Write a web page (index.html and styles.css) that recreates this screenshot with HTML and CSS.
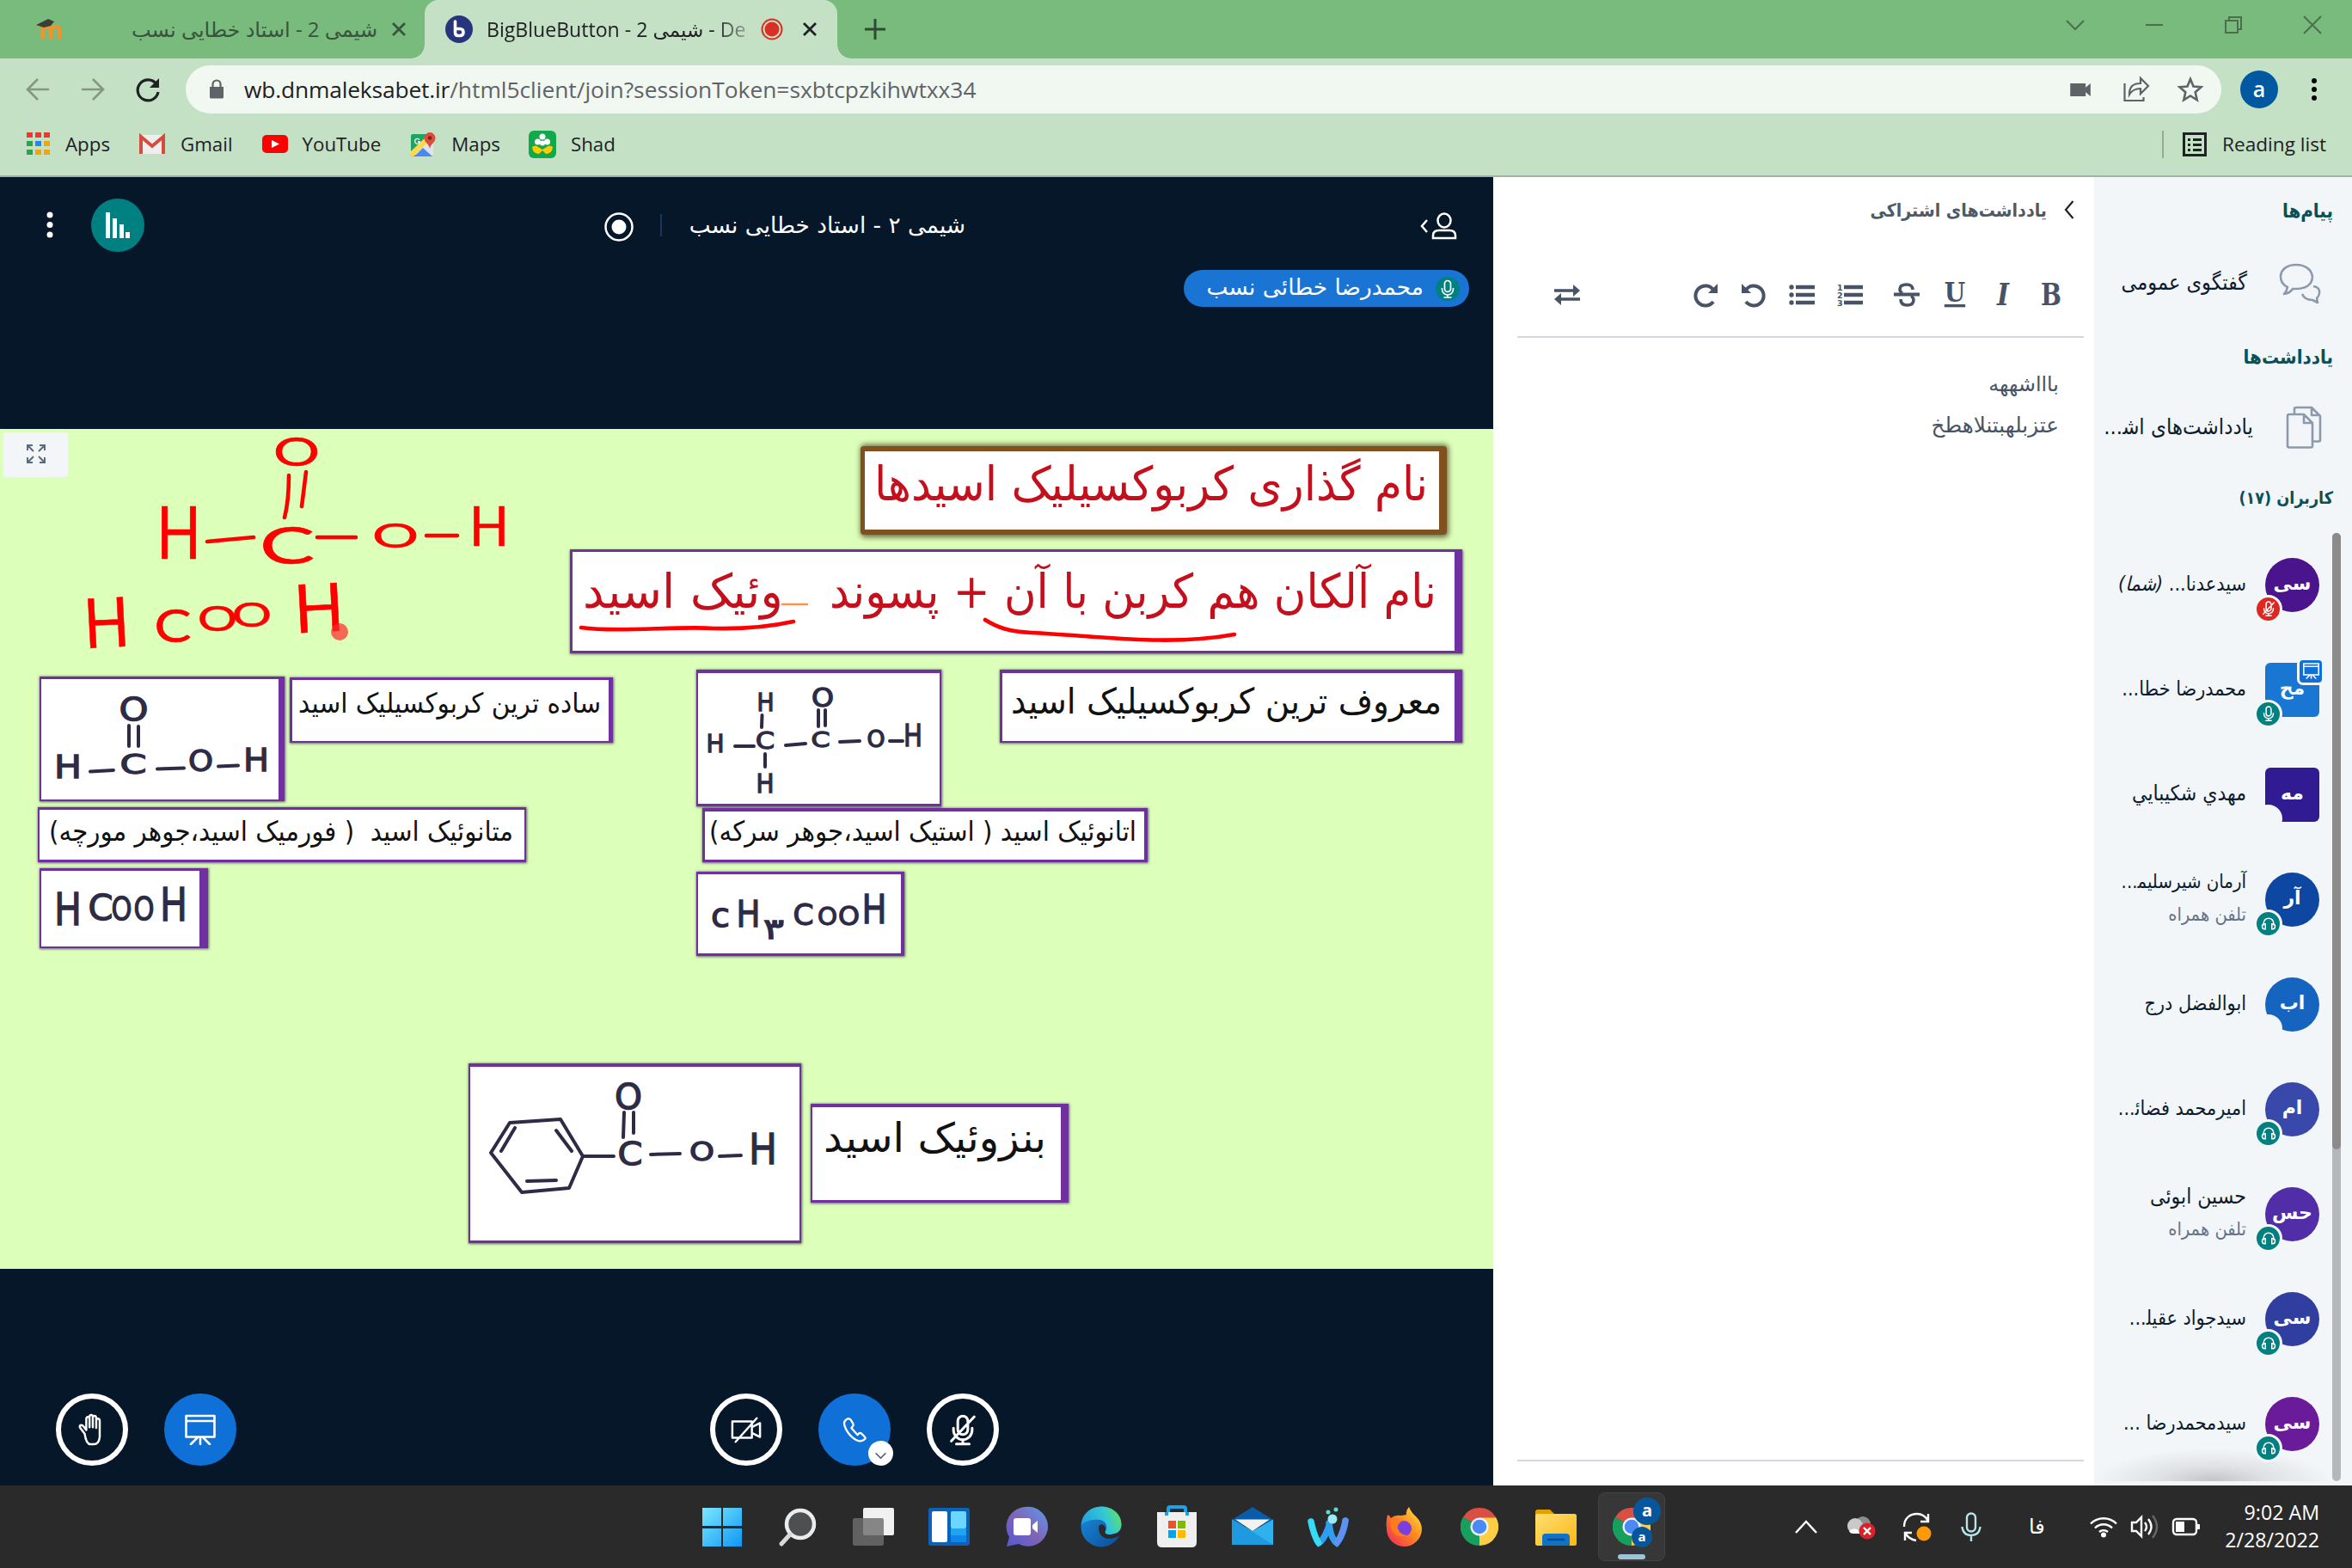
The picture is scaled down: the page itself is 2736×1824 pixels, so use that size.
FILE: index.html
```html
<!DOCTYPE html>
<html lang="fa">
<head>
<meta charset="utf-8">
<title>BigBlueButton - شیمی 2</title>
<link rel="stylesheet" href="styles.css">
</head>
<body>
<svg class="defs" width="0" height="0" aria-hidden="true">
  <defs>
    <symbol id="mic" viewBox="0 0 24 24"><path d="M12 2.5a3.5 3.5 0 0 0-3.5 3.5v6a3.5 3.5 0 0 0 7 0V6A3.5 3.5 0 0 0 12 2.5zM5.5 11v1.5a6.5 6.5 0 0 0 13 0V11M12 19v3M7.500 22h9"/></symbol>
    <symbol id="mic-off" viewBox="0 0 24 24"><path d="M12 2.500a3.500 3.500 0 0 0-3.500 3.500v6a3.500 3.500 0 0 0 7 0V6A3.500 3.500 0 0 0 12 2.500zM5.500 11v1.500a6.500 6.500 0 0 0 13 0V11M12 19v3M7.500 22h9M20 3 4 20"/></symbol>
    <symbol id="headset" viewBox="0 0 24 24"><path d="M5 15v-3a7 7 0 0 1 14 0v3M6 13c-2 0-3 1.500-3 3.500S4 20 6 20h1.500v-7zM18 13c2 0 3 1.500 3 3.500S20 20 18 20h-1.500v-7z"/></symbol>
    <symbol id="board" viewBox="0 0 36 36"><path d="M1.500 2h33v24.500h-33zM1.500 8h33M18 27v8M15 27 7 35M21 27l8 8"/></symbol>
    <symbol id="chrome" viewBox="0 0 48 48">
      <path d="M24 24 3.200 12A24 24 0 0 1 44.800 12z" fill="#d94f44"/>
      <path d="M24 24 44.800 12A24 24 0 0 1 24 48z" fill="#ffce44"/>
      <path d="M24 24 24 48A24 24 0 0 1 3.200 12z" fill="#17a05d"/>
      <path d="M24 12.500h21L34 30 24 48z" fill="#ffce44"/>
      <path d="M3.200 12 14 30l10 5-3 12.800A24 24 0 0 1 3.200 12z" fill="#17a05d"/>
      <circle cx="24" cy="24" r="11.500" fill="#f4f4f4"/><circle cx="24" cy="24" r="9" fill="#4a8af4"/>
    </symbol>
    <linearGradient id="win" x1="0" y1="0" x2="1" y2="1"><stop offset="0" stop-color="#7be8ff"/><stop offset="1" stop-color="#1097f3"/></linearGradient>
    <linearGradient id="team" x1="1" y1="0" x2="0" y2="1"><stop offset="0" stop-color="#5d9bf0"/><stop offset=".5" stop-color="#8065b5"/><stop offset="1" stop-color="#5558d6"/></linearGradient>
    <linearGradient id="edge1" x1="0" y1=".5" x2="1" y2=".2"><stop offset="0" stop-color="#1f9fe0"/><stop offset=".6" stop-color="#35c8d5"/><stop offset="1" stop-color="#63e558"/></linearGradient>
    <linearGradient id="edge2" x1="0" y1="0" x2="1" y2="1"><stop offset="0" stop-color="#1a8fe0"/><stop offset="1" stop-color="#0c4a94"/></linearGradient>
    <linearGradient id="fox" x1="1" y1="0" x2="0" y2="1"><stop offset="0" stop-color="#fff04d"/><stop offset=".45" stop-color="#ff8a1e"/><stop offset="1" stop-color="#f0215e"/></linearGradient>
    <linearGradient id="fold" x1="0" y1="0" x2="1" y2="1"><stop offset="0" stop-color="#ffdf73"/><stop offset="1" stop-color="#fbb813"/></linearGradient>
  </defs>
</svg>

<header class="tabstrip">
  <div class="tab">
    <svg class="moodle" viewBox="0 0 34 26"><path d="M10 25V14q0-4 4-4t5 4v11M19 25V14q0-4 5-4t5 4v11" fill="none" stroke="#f0932b" stroke-width="4.500"/><path d="M2 8 16 1l7 3-4 5-8 2z" fill="#3c3f38"/><path d="M3 9v8" stroke="#b9a04a"/></svg>
    <span class="tab-title fa" dir="rtl">شیمی 2 - استاد خطایی نسب</span>
    <svg class="x" viewBox="0 0 18 18"><path d="m2 2 14 14M16 2 2 16"/></svg>
  </div>
  <div class="tab active">
    <svg class="bbb" viewBox="0 0 32 32"><circle cx="16" cy="16" r="16" fill="#27357c"/><path d="M11.500 7v13q0 3.500 3.500 3.500h2q4 0 4-4t-4-4h-5" fill="none" stroke="#fff" stroke-width="3.600" stroke-linecap="round"/></svg>
    <span class="tab-title clip">BigBlueButton - شیمی 2 - De</span>
    <svg class="rec" viewBox="0 0 26 26"><circle cx="13" cy="13" r="11.500" fill="none" stroke="#d93025" stroke-width="2"/><circle cx="13" cy="13" r="8.500" fill="#d93025"/></svg>
    <svg class="x" viewBox="0 0 18 18"><path d="m2 2 14 14M16 2 2 16"/></svg>
  </div>
  <svg class="plus" viewBox="0 0 26 26"><path d="M13 1v24M1 13h24"/></svg>
  <div class="winctl">
    <svg viewBox="0 0 22 22"><path d="m1 6 10 10L21 6"/></svg>
    <svg viewBox="0 0 22 22"><path d="M1 11h20"/></svg>
    <svg viewBox="0 0 22 22"><path d="M2 6h14v14H2zM6 6V2h14v14h-4"/></svg>
    <svg viewBox="0 0 22 22"><path d="m1 1 20 20M21 1 1 21"/></svg>
  </div>
</header>

<div class="toolbar">
  <svg class="nav dim" viewBox="0 0 28 28"><path d="M27 14H2M14 2 2 14l12 12"/></svg>
  <svg class="nav dim" viewBox="0 0 28 28"><path d="M1 14h25M14 2l12 12-12 12"/></svg>
  <svg class="nav" viewBox="0 0 28 28"><path d="M24 8A12 12 0 1 0 26 17" stroke-width="3.200"/><path d="M27 1v11H16z" fill="#202124" stroke="none"/></svg>
  <div class="omnibox">
    <svg class="lock" viewBox="0 0 18 24"><path d="M1 9h16v12q0 1.500-1.500 1.500h-13Q1 22.500 1 21z" fill="#5f6368"/><path d="M4.500 9V6a4.500 4.500 0 0 1 9 0v3" fill="none" stroke="#5f6368" stroke-width="2.200"/></svg>
    <span class="url"><b>wb.dnmaleksabet.ir</b>/html5client/join?sessionToken=sxbtcpzkihwtxx34</span>
    <svg class="ob cam" viewBox="0 0 26 18"><path d="M0 1h19v5l6-5v16l-6-5v5H0z" fill="#5f6368"/></svg>
    <svg class="ob share" viewBox="0 0 30 30"><path d="M1.500 8v20h22v-4M7 21c0-9 4-13 13-13V2l9 9-9 9v-6c-6 0-10 2-13 7z" fill="none" stroke="#5f6368" stroke-width="2.200"/></svg>
    <svg class="ob star" viewBox="0 0 30 30"><path d="m15 3 3.500 8.500 9 .8-6.800 6 2 9L15 22.500l-7.700 4.800 2-9-6.800-6 9-.8z" fill="none" stroke="#5f6368" stroke-width="2.600"/></svg>
  </div>
  <span class="me">a</span>
  <svg class="kebab" viewBox="0 0 6 28"><circle cx="3" cy="4" r="3"/><circle cx="3" cy="14" r="3"/><circle cx="3" cy="24" r="3"/></svg>
</div>

<nav class="bookmarks">
  <svg class="ico" viewBox="0 0 27 27"><g fill="#f5342c"><path d="M0 0h7v6H0zM10 0h7v6h-7zM20 0h7v6h-7z"/></g><path d="M0 10h7v6H0zM0 20h7v6H0z" fill="#2ea24f"/><path d="M10 10h7v6h-7z" fill="#1e88f5"/><path d="M20 10h7v6h-7zM10 20h7v6h-7zM20 20h7v6h-7z" fill="#f3a500"/></svg>
  <span>Apps</span>
  <svg class="ico g" viewBox="0 0 30 22"><rect width="30" height="22" rx="1.500" fill="#eee"/><path d="M2 22V2l13 11L28 2v20" fill="none" stroke="#d54b3d" stroke-width="4"/></svg>
  <span>Gmail</span>
  <svg class="ico y" viewBox="0 0 30 21"><rect width="30" height="21" rx="5" fill="#f00"/><path d="m11 6 9 4.500-9 4.500z" fill="#fff"/></svg>
  <span>YouTube</span>
  <svg class="ico m" viewBox="0 0 30 30"><rect y="3" width="26" height="26" rx="2" fill="#1fa363"/><path d="M0 27 24 4l2 4v19q0 2-2 2z" fill="#dfe3ea"/><path d="M0 23 20 4l4 4L3 29H2q-2 0-2-2z" fill="#ffd84d"/><path d="m4 29 10-10 11 10z" fill="#4a89f3"/><path d="M22 1a6.500 6.500 0 0 1 6.500 6.500C28.500 13 23 14 22 20c-1-6-6.500-7-6.500-12.500A6.500 6.500 0 0 1 22 1z" fill="#dc4b3e"/><circle cx="22" cy="7.500" r="2.300" fill="#7d2419"/><path d="M10 9.500A3 3 0 1 0 10.500 12H8" fill="none" stroke="#fff" stroke-width="1.300"/></svg>
  <span>Maps</span>
  <svg class="ico s" viewBox="0 0 32 32"><rect width="32" height="32" rx="6" fill="#12a84b"/><g fill="#fff"><circle cx="16" cy="7" r="3.500"/><circle cx="10.500" cy="13" r="3.500"/><circle cx="21.500" cy="13" r="3.500"/><circle cx="16" cy="14.500" r="3"/></g><path d="M4 19q4-3 7 0l5 3 5-3q3-3 7 0-1 8-8 8l-4-4-4 4q-7 0-8-8z" fill="#fc0"/></svg>
  <span>Shad</span>
  <div class="reading">
    <svg viewBox="0 0 28 28"><path d="M1.500 1.500h25v25h-25z" fill="none" stroke="#202124" stroke-width="3"/><path d="M6 8.500h3M6 14.500h3M6 20.500h3M12 8.500h10M12 14.500h10M12 20.500h10" stroke="#202124" stroke-width="3"/></svg>
    <span>Reading list</span>
  </div>
</nav>

<main class="app">
  <section class="stage">
    <div class="stage-head">
      <svg class="dots" viewBox="0 0 8 32"><circle cx="4" cy="4" r="3.500"/><circle cx="4" cy="15.500" r="3.500"/><circle cx="4" cy="27" r="3.500"/></svg>
      <span class="stats"><svg viewBox="0 0 30 30"><path d="M1 0h5v30H1zM9 7h5v23H9zM17 14h5v16h-5zM24 23h5v7h-5z" fill="#fff"/></svg></span>
      <svg class="record" viewBox="0 0 34 34"><circle cx="17" cy="17" r="15.500" fill="none" stroke="#fff" stroke-width="2.500"/><circle cx="17" cy="17" r="8.500" fill="#fff"/></svg>
      <i class="bar"></i>
      <h1 dir="rtl">شیمی ۲ - استاد خطایی نسب</h1>
      <svg class="users" viewBox="0 0 44 32"><path d="m8 9-6 7 6 7" /><ellipse cx="28" cy="9.500" rx="7.500" ry="8"/><path d="M15 30v-3q0-6 7-6h12q7 0 7 6v3z"/></svg>
    </div>
    <div class="talking" dir="rtl"><span class="mic-dot"><svg><use href="#mic"/></svg></span><span>محمدرضا خطائی نسب</span></div>

    <div class="slide">
      <svg class="canvas" viewBox="0 499 1737 977">
        <defs><filter id="soft" x="-5%" y="-20%" width="110%" height="140%"><feGaussianBlur stdDeviation="3"/></filter>
        <filter id="soft2" x="-5%" y="-20%" width="110%" height="140%"><feGaussianBlur stdDeviation="1.500"/></filter></defs>
        <rect x="1001" y="517" width="684" height="108" rx="5" fill="#4d4226" opacity=".8" filter="url(#soft)"/>
        <rect x="1001" y="519" width="682" height="103" rx="4" fill="#80501f"/><rect x="1006" y="525" width="668" height="91" fill="#fff"/>
        <g fill="#3a3050" opacity=".75" filter="url(#soft2)">
          <rect x="663" y="640" width="1039" height="121"/><rect x="1163" y="779" width="539" height="86"/><rect x="810" y="779" width="286" height="160"/><rect x="817" y="940" width="519" height="64"/><rect x="810" y="1014" width="243" height="99"/><rect x="337" y="788" width="377" height="77"/><rect x="46" y="787" width="286" height="146"/><rect x="44" y="939" width="569" height="65"/><rect x="46" y="1010" width="197" height="94"/><rect x="545" y="1237" width="388" height="210"/><rect x="943" y="1284" width="301" height="116"/>
        </g>
        <g fill="#7030a0">
          <rect x="663" y="639" width="1038" height="121"/><rect x="1163" y="779" width="538" height="85"/><rect x="810" y="779" width="285" height="159"/><rect x="817" y="940" width="518" height="63"/><rect x="810" y="1014" width="242" height="98"/><rect x="337" y="788" width="376" height="76"/><rect x="46" y="787" width="285" height="145"/><rect x="44" y="939" width="568" height="64"/><rect x="46" y="1010" width="196" height="93"/><rect x="545" y="1237" width="387" height="209"/><rect x="943" y="1284" width="300" height="115"/>
        </g>
        <g fill="#fff">
          <rect x="666" y="642" width="1026" height="115"/><rect x="1166" y="783" width="526" height="79"/><rect x="812" y="783" width="281" height="152"/><rect x="820" y="944" width="511" height="56"/><rect x="812" y="1017" width="236" height="92"/><rect x="340" y="791" width="368" height="71"/><rect x="48" y="790" width="276" height="140"/><rect x="46" y="942" width="564" height="58"/><rect x="48" y="1013" width="184" height="88"/><rect x="547" y="1241" width="383" height="202"/><rect x="945" y="1288" width="289" height="108"/>
        </g>
        <g class="caption red" font-size="55">
          <text x="1661" y="582" textLength="644" lengthAdjust="spacingAndGlyphs">نام گذاری کربوکسیلیک اسیدها</text>
          <text x="1671" y="707" textLength="706" lengthAdjust="spacingAndGlyphs">نام آلکان هم کربن با آن + پسوند</text>
          <text x="911" y="707" textLength="233" lengthAdjust="spacingAndGlyphs">وئیک اسید</text>
        </g>
        <path d="M909 703h31" stroke="#f79646" stroke-width="2.500"/>
        <g class="caption" font-size="41">
          <text x="1677" y="830" textLength="501" lengthAdjust="spacingAndGlyphs">معروف ترین کربوکسیلیک اسید</text>
          <text x="1217" y="1340" font-size="47" textLength="259" lengthAdjust="spacingAndGlyphs">بنزوئیک اسید</text>
        </g>
        <g class="caption" font-size="32">
          <text x="699" y="829" textLength="352" lengthAdjust="spacingAndGlyphs">ساده ترین کربوکسیلیک اسید</text>
          <text x="1322" y="978" textLength="497" lengthAdjust="spacingAndGlyphs">اتانوئیک اسید ( استیک اسید،جوهر سرکه)</text>
          <text x="597" y="978" textLength="540" lengthAdjust="spacingAndGlyphs">متانوئیک اسید&#160; ( فورمیک اسید،جوهر مورچه)</text>
        </g>
        <g class="formula">
          <text x="155.500" y="838" font-size="37" textLength="34" lengthAdjust="spacingAndGlyphs">O</text>
          <text x="79" y="905" font-size="37" textLength="32" lengthAdjust="spacingAndGlyphs">H</text>
          <text x="155" y="900" font-size="32" textLength="31" lengthAdjust="spacingAndGlyphs">C</text>
          <text x="233.500" y="897" font-size="33" textLength="29" lengthAdjust="spacingAndGlyphs">O</text>
          <text x="298" y="897" font-size="38" textLength="30" lengthAdjust="spacingAndGlyphs">H</text>
          <text x="79" y="1076" font-size="52" textLength="32" lengthAdjust="spacingAndGlyphs">H</text>
          <text x="117" y="1070" font-size="41" textLength="29" lengthAdjust="spacingAndGlyphs">C</text>
          <text x="141.500" y="1070" font-size="37" textLength="24" lengthAdjust="spacingAndGlyphs">O</text>
          <text x="167.500" y="1070" font-size="37" textLength="24" lengthAdjust="spacingAndGlyphs">O</text>
          <text x="202" y="1071" font-size="54" textLength="32" lengthAdjust="spacingAndGlyphs">H</text>
          <text x="890.500" y="827" font-size="28" textLength="20" lengthAdjust="spacingAndGlyphs">H</text>
          <text x="890" y="871" font-size="26" textLength="22" lengthAdjust="spacingAndGlyphs">C</text>
          <text x="890" y="922" font-size="30" textLength="21" lengthAdjust="spacingAndGlyphs">H</text>
          <text x="832" y="875" font-size="28" textLength="21" lengthAdjust="spacingAndGlyphs">H</text>
          <text x="954.500" y="869" font-size="25" textLength="22" lengthAdjust="spacingAndGlyphs">C</text>
          <text x="957" y="822" font-size="30" textLength="26" lengthAdjust="spacingAndGlyphs">O</text>
          <text x="1019" y="869" font-size="26" textLength="21" lengthAdjust="spacingAndGlyphs">O</text>
          <text x="1062" y="868" font-size="36" textLength="22" lengthAdjust="spacingAndGlyphs">H</text>
          <text x="838" y="1078" font-size="37" textLength="22" lengthAdjust="spacingAndGlyphs">c</text>
          <text x="870.500" y="1078" font-size="43" textLength="28" lengthAdjust="spacingAndGlyphs">H</text>
          <text x="900" y="1092" font-size="33" textLength="24" lengthAdjust="spacingAndGlyphs">۳</text>
          <text x="934.500" y="1076" font-size="33" textLength="24" lengthAdjust="spacingAndGlyphs">C</text>
          <text x="962.500" y="1076" font-size="29" textLength="23" lengthAdjust="spacingAndGlyphs">O</text>
          <text x="987.500" y="1076" font-size="31" textLength="25" lengthAdjust="spacingAndGlyphs">O</text>
          <text x="1017" y="1074" font-size="47" textLength="29" lengthAdjust="spacingAndGlyphs">H</text>
          <text x="733" y="1355" font-size="38" textLength="29" lengthAdjust="spacingAndGlyphs">C</text>
          <text x="731" y="1290" font-size="40" textLength="32" lengthAdjust="spacingAndGlyphs">O</text>
          <text x="816.500" y="1350" font-size="31" textLength="29" lengthAdjust="spacingAndGlyphs">O</text>
          <text x="887.500" y="1354" font-size="50" textLength="33" lengthAdjust="spacingAndGlyphs">H</text>
        </g>
        <path class="bond" d="M150 844v24M161 845v23M105 897.500l27-1.500M183 894.500l31-1M254 891.500l23-1M886.500 832l-.5 14M890 877v15M855 868h22M914 867l23-2M952 826v19M960 826v18M977 863l23-1M1035 862h15M593 1306l59-4 26 43-16 37-55 5-36-46zM599 1312l-16 27M647 1315l18 24M613 1374l34-1M678 1345h36M726 1294l-1 29M737 1294v24M757 1343l34-1M837 1345l25-1"/>
        <g class="ink-letters">
          <text x="345" y="542" font-size="46" textLength="54" lengthAdjust="spacingAndGlyphs">O</text>
          <text x="208" y="650" font-size="86" textLength="52" lengthAdjust="spacingAndGlyphs">H</text>
          <text x="334" y="656" font-size="60" textLength="64" lengthAdjust="spacingAndGlyphs">C</text>
          <text x="460" y="637" font-size="38" textLength="54" lengthAdjust="spacingAndGlyphs">O</text>
          <text x="569" y="635" font-size="63" textLength="46" lengthAdjust="spacingAndGlyphs">H</text>
          <text x="124" y="753" font-size="80" textLength="53" lengthAdjust="spacingAndGlyphs" transform="rotate(-3 124 725)">H</text>
          <text x="201" y="747" font-size="53" textLength="43" lengthAdjust="spacingAndGlyphs">C</text>
          <text x="253" y="734" font-size="40" textLength="46" lengthAdjust="spacingAndGlyphs">O</text>
          <text x="293" y="729" font-size="38" textLength="46" lengthAdjust="spacingAndGlyphs">O</text>
          <text x="371" y="735" font-size="78" textLength="58" lengthAdjust="spacingAndGlyphs" transform="rotate(-3 371 708)">H</text>
        </g>
        <path class="ink" d="M336 553q0 30-5 49M356 549l-5 40M241 630l54-5M369 625h45M496 623h36M676 730c44 6 114-2 154 1 40 1 70-3 93-8M1146 721c14 9 29 14 54 15 80 4 160 16 236 2"/>
        <circle cx="395" cy="735" r="10" fill="#ff2a2a" opacity=".7"/>
      </svg>
      <button class="full"><svg viewBox="0 0 22 22"><path d="M8 8 1.500 1.500M1 7V1h6M14 8l6.500-6.500M15 1h6v6M8 14l-6.500 6.500M1 15v6h6M14 14l6.500 6.500M15 21h6v-6"/></svg></button>
    </div>

    <div class="actions">
      <button class="round"><svg viewBox="0 0 36 38"><path d="M9 24 3.500 17q-1.500-3 1-3.500 2 0 3.500 2l3 4V6q0-2.500 2-2.500T15 6v10V3.500Q15 1 17 1t2 2.500V16 4.500Q19 2 21 2t2.200 2.500V17 8q0-2.500 2-2.500t2.300 2.500v20q-1 9-7.500 9h-4q-5 0-7-13z"/></svg></button>
      <button class="round blue"><svg><use href="#board"/></svg></button>
      <button class="round cam-btn"><svg viewBox="0 0 38 32"><path d="M2 6h24v20H2zM26 13l10-5v17l-10-5M32 2 6 31"/></svg></button>
      <button class="round blue phone"><svg viewBox="0 0 34 34"><path d="M6 4q-4 3-2 8 3 9 10 15t12 5q4-1 5-3 1-1-1-3l-4-4q-2-1-3 0l-2 2-8-9 2-3q1-1 0-3L12 4q-3-3-6 0z"/></svg><span class="more"><svg viewBox="0 0 16 10"><path d="m2 2 6 6 6-6"/></svg></span></button>
      <button class="round"><svg class="big-mic"><use href="#mic-off"/></svg></button>
    </div>
  </section>

  <section class="notes">
    <h2 dir="rtl"><svg viewBox="0 0 12 24"><path d="M10.500 2 2 12l8.500 10"/></svg><span>یادداشت‌های اشتراکی</span></h2>
    <div class="pad">
      <div class="pad-tools">
        <svg class="swap" viewBox="0 0 30 30"><path d="M0 10h24M6 20h24" stroke-width="3.600"/><path d="m22 3 8 7-8 7zM8 13l-8 7 8 7z" fill="#485365" stroke="none"/></svg>
        <svg class="redo" viewBox="0 0 30 30"><path d="M24 9A11.500 11.500 0 1 0 24 23"/><path d="M29 2v11H18z" fill="#485365" stroke="none"/></svg>
        <svg viewBox="0 0 30 30"><path d="M6 9a11.500 11.500 0 1 1 0 14"/><path d="M1 2v11h11z" fill="#485365" stroke="none"/></svg>
        <svg viewBox="0 0 30 30"><path d="M8 6h22M8 15h22M8 24h22" stroke-width="4.400"/><g fill="#485365" stroke="none"><circle cx="3" cy="6" r="2.700"/><circle cx="3" cy="15" r="2.700"/><circle cx="3" cy="24" r="2.700"/></g></svg>
        <svg viewBox="0 0 30 30"><path d="M8 6h22M8 15h22M8 24h22" stroke-width="4.400"/><g class="num"><text x="0" y="9.500">1</text><text x="0" y="18.500">2</text><text x="0" y="27.500">3</text></g></svg>
        <svg class="strike" viewBox="0 0 30 30"><path d="M22 9q0-6-7-6-8 0-8 5.500 0 3 3 4.500M8 20q0 7 7.500 7 7.500 0 7.500-6 0-3-3-4.500" stroke-width="3.600"/><path d="M0 14.500h30" stroke-width="4"/></svg>
        <svg class="letter" viewBox="0 0 30 32"><text x="15" y="24" font-size="33" textLength="26" lengthAdjust="spacingAndGlyphs">U</text><path d="M2 29.500h26" stroke-width="3.600"/></svg>
        <svg class="letter" viewBox="0 0 30 30"><text x="15" y="27" font-size="35" font-style="italic" textLength="14" lengthAdjust="spacingAndGlyphs">I</text></svg>
        <svg class="letter" viewBox="0 0 30 30"><text x="15" y="27" font-size="35" textLength="24" lengthAdjust="spacingAndGlyphs">B</text></svg>
      </div>
      <div class="pad-body" dir="rtl"><p class="n1">باااشههه</p><p class="n2">عتزبلهبتنلاهطخ</p></div>
    </div>
  </section>

  <aside class="side" dir="rtl">
    <h3 class="h-a">پیام‌ها</h3>
    <div class="link chat"><svg viewBox="0 0 50 50"><path d="M20 3C10 3 2 8 2 17q0 8 8 12-1 5-4 8 7-1 10-6 22 1 23-14C38 8 30 3 20 3zM40 28q8 1 7 8 0 3-3 6l1 5-6-3q-9 0-12-7"/></svg><span>گفتگوی عمومی</span></div>
    <h3 class="h-a">یادداشت‌ها</h3>
    <div class="link pages"><svg viewBox="0 0 42 50"><path d="M10 9V3.500Q10 2 12 2h18l10 10v28q0 1.500-1.500 1.500H32M30 2v9h10M2 12q0-2 2-2h17l10 10v27q0 1.500-2 1.500H4q-2 0-2-2zM21 10v10h10"/></svg><span>یادداشت‌های اش‍...</span></div>
    <h3 class="h-b">کاربران (۱۷)</h3>
    <div class="roster">
      <div class="scroll"><i></i></div>
      <ul>
        <li><span class="av c1">سی<i class="bd red"><svg><use href="#mic-off"/></svg></i></span><div><span>سیدعدنا... <em>(شما)</em></span></div></li>
        <li><span class="av sq c2">مح<i class="pres"><svg><use href="#board"/></svg></i><i class="bd"><svg><use href="#mic"/></svg></i></span><div><span>محمدرضا خطا...</span></div></li>
        <li class="wide"><span class="av sq c3">مه<i class="bd none"></i></span><div><span>مهدي شکيبايي</span></div></li>
        <li class="tight"><span class="av c4">آر<i class="bd"><svg><use href="#headset"/></svg></i></span><div><span>آرمان شیرسلیم‍...</span><small>تلفن همراه</small></div></li>
        <li><span class="av c5">اب<i class="bd none"></i></span><div><span>ابوالفضل درج</span></div></li>
        <li><span class="av c6">ام<i class="bd"><svg><use href="#headset"/></svg></i></span><div><span>امیرمحمد فضائ‍...</span></div></li>
        <li class="wide"><span class="av c7">حس<i class="bd"><svg><use href="#headset"/></svg></i></span><div><span>حسین ابوئی</span><small>تلفن همراه</small></div></li>
        <li><span class="av c8">سی<i class="bd"><svg><use href="#headset"/></svg></i></span><div><span>سیدجواد عقیل‍...</span></div></li>
        <li><span class="av c9">سی<i class="bd"><svg><use href="#headset"/></svg></i></span><div><span>سیدمحمدرضا ...</span></div></li>
      </ul>
    </div>
  </aside>
</main>

<footer class="taskbar">
  <div class="apps">
    <svg viewBox="0 0 48 48"><path d="M1 2h22v21H1zM25 2h22v21H25zM1 26h22v21H1zM25 26h22v21H25z" fill="url(#win)"/></svg>
    <svg viewBox="0 0 48 48"><circle cx="27" cy="21" r="16" fill="#4d4f50" stroke="#ececec" stroke-width="4.500"/><path d="M15 33 5 44" stroke="#d7dadb" stroke-width="5" stroke-linecap="round"/></svg>
    <svg viewBox="0 0 48 48"><rect x="12" y="2" width="36" height="32" rx="2" fill="#f1f1f1"/><rect x="0" y="14" width="36" height="32" rx="2" fill="#6e6e6e" opacity=".82"/></svg>
    <svg viewBox="0 0 48 48"><rect y="2" width="48" height="44" rx="3" fill="#0c62b8"/><rect x="4" y="6" width="18" height="36" rx="2" fill="#fff"/><rect x="26" y="6" width="18" height="20" rx="2" fill="#6bd6ff"/><path d="M26 26h18v8H26z" fill="#1ea4f0"/><path d="M26 34h18v8H26z" fill="#0d87ea"/></svg>
    <svg viewBox="0 0 48 48"><path d="M24 1a23 23 0 1 1-8 43L2 47l3-11A23 23 0 0 1 24 1z" fill="url(#team)"/><rect x="10" y="14" width="20" height="20" rx="3" fill="#fff"/><path d="m32 22 6-5v14l-6-5z" fill="#fff"/></svg>
    <svg viewBox="0 0 48 48"><circle cx="24" cy="24" r="23.500" fill="url(#edge2)"/><path d="M.5 22C2 8 12 .5 25 .5 39 1 48 11 47.500 22c-1 8-6 11-14 11-4 0-6-2-4-5 2-4 0-11-7-12C12 15 4 18 .5 22z" fill="url(#edge1)"/><path d="M29 28c-2 3 0 5 4 5 7 0 12-2 14.500-7V30q-1 2-2 4-4 3-12 4c-9 0-14-8-12-15 3-4 8-1 7.500 5z" fill="#2a2a2b"/></svg>
    <svg viewBox="0 0 48 48"><path d="M14 9V3q0-2 2-2h16q2 0 2 2v6" fill="none" stroke="#1da1e8" stroke-width="4"/><path d="M1 7h46v35q0 6-6 6H7q-6 0-6-6z" fill="#efefef"/><path d="M12 7v4M36 7v4" stroke="#1da1e8" stroke-width="4"/><path d="M14 17h9v9h-9z" fill="#f25022"/><path d="M25 17h9v9h-9z" fill="#7fba00"/><path d="M14 28h9v9h-9z" fill="#00a4ef"/><path d="M25 28h9v9h-9z" fill="#ffb900"/></svg>
    <svg viewBox="0 0 48 48"><path d="M0 16 24 1l24 15v6H0z" fill="#0a5ba8"/><path d="M0 15.500 24 29l24-13.500V45H0z" fill="#2fb1ee"/><path d="m0 15.500 20 11.500 28 18H0z" fill="#1d9ae0"/><path d="M4 15.500h40L24 29z" fill="#f2f2f2"/></svg>
    <svg viewBox="0 0 48 48"><path d="M4 18q5 20 9 25 6-3 12-20M25 20q2 18 9 23 8-10 10-26" fill="none" stroke="#2f9df0" stroke-width="7.500" stroke-linecap="round"/><path d="M4 18q3 16 9 25" fill="none" stroke="#38dcf2" stroke-width="7" stroke-linecap="round"/><path d="M44 17q-3 16-10 26" fill="none" stroke="#6090f2" stroke-width="7" stroke-linecap="round"/><circle cx="29" cy="15" r="5.500" fill="#9be9f5"/><circle cx="24" cy="7" r="2.500" fill="#5dd"/><circle cx="33" cy="4" r="2.500" fill="#5dd"/></svg>
    <svg viewBox="0 0 48 48"><path d="M5 10q3 1 4 4 5-4 12-3l6-1Q26 5 30 1q3 7 8 11 7 7 7 15a20.500 20.500 0 1 1-41-1Q3 18 5 10z" fill="url(#fox)"/><circle cx="24" cy="26" r="9" fill="#7b3fe0"/><path d="M9 14q7 2 12 4-5 4-4 8 3 8 12 8-16 5-20-9z" fill="#ff7b1b"/></svg>
    <svg viewBox="0 0 48 48"><use href="#chrome" x="2" y="2" width="44" height="44"/></svg>
    <svg viewBox="0 0 48 48"><path d="M0 7q0-3 3-3h14l5 5v9H0z" fill="#e2a100"/><rect y="9" width="48" height="37" rx="2.500" fill="url(#fold)"/><path d="M8 46V36q0-4 4-4h24q4 0 4 4v10z" fill="#1173c8"/><path d="M14 39h20" stroke="#0a4a8c" stroke-width="2.500"/></svg>
    <div class="current">
      <svg viewBox="0 0 78 80"><use href="#chrome" x="17" y="18" width="44" height="44"/><circle cx="57" cy="22" r="16" fill="#05569d"/><circle cx="51" cy="52" r="12" fill="#05569d"/><text x="57" y="28" font-size="20">a</text><text x="51" y="57" font-size="15">a</text></svg>
      <i></i>
    </div>
  </div>
  <div class="tray">
    <svg class="t1" viewBox="0 0 28 16"><path d="M2 15 14 2l12 13"/></svg>
    <svg class="t2" viewBox="0 0 34 30"><circle cx="19" cy="12" r="9" fill="#8d8d8d" stroke="none"/><circle cx="10" cy="14" r="9" fill="#c9c9c9" stroke="none"/><path d="M3 20q8-6 14 3H8q-4 0-5-3z" fill="#fff" stroke="none"/><circle cx="24" cy="20" r="9.500" fill="#d8232a" stroke="none"/><path d="m20 16 8 8M28 16l-8 8"/></svg>
    <svg class="t3" viewBox="0 0 34 34"><path d="M2 17C2 6 10 2 17 2q8 0 13 8M30 2v9h-9M3 33v-9h8M3 24q5 8 13 9"/><circle cx="25" cy="25" r="8.500" fill="#fe9a08" stroke="none"/></svg>
    <svg class="t4" viewBox="0 0 24 34"><rect x="7" y="1.500" width="10" height="21" rx="5"/><path d="M1.500 17q1 10 10.500 10t10.500-10M12 27v7"/></svg>
    <span class="lang">فا</span>
    <svg class="t5" viewBox="0 0 34 26"><path d="M2 9.500a21 21 0 0 1 30 0M7 14.500a14 14 0 0 1 20 0M12 19a7.500 7.500 0 0 1 10 0"/><circle cx="17" cy="22.500" r="3" fill="#fff" stroke="none"/></svg>
    <svg class="t6" viewBox="0 0 34 28"><path d="M2 9h5l6-6v22l-6-6H2zM17 9q4 5 0 10M21 5q7 9 0 18"/><path d="M26 1q10 13 0 26" stroke="#666"/></svg>
    <svg class="t7" viewBox="0 0 34 22"><rect x="2" y="2" width="27" height="18" rx="4"/><path d="M31 8v6" stroke-width="4"/><path d="M5 5h10v12H5z" fill="#fff" stroke="none"/></svg>
    <div class="clock"><span>9:02 AM</span><span>2/28/2022</span></div>
  </div>
</footer>
</body>
</html>
```
FILE: styles.css
```css
* { box-sizing: border-box; }
body {
  margin: 0;
  width: 2736px;
  height: 1824px;
  overflow: hidden;
  display: flex;
  flex-direction: column;
  font-family: "Open Sans", "DejaVu Sans", sans-serif;
  color: #202124;
}
.defs { position: absolute; }
svg { display: block; flex: none; overflow: visible; }
button { border: 0; padding: 0; background: none; }
h1, h2, h3, p, ul { margin: 0; padding: 0; font-weight: normal; list-style: none; }

/* browser chrome */
.tabstrip { height: 68px; background: #79bb7c; display: flex; align-items: center; flex: none; }
.tab { height: 68px; display: flex; align-items: center; width: 494px; padding-left: 40px; }
.moodle { width: 34px; height: 26px; }
.tab-title { font-size: 24px; white-space: nowrap; line-height: 34px; }
.tab .fa { margin-left: 79px; font-size: 24px; color: #37553a; }
.tab .x { width: 18px; height: 18px; margin-left: 16px; stroke: #37553a; stroke-width: 2.8; }
.tab.active { width: 480px; background: #c5e1c5; border-radius: 16px 16px 0 0; padding-left: 24px; position: relative; }
.tab.active::before, .tab.active::after { content: ""; position: absolute; bottom: 0; width: 16px; height: 16px; }
.tab.active::before { left: -16px; background: radial-gradient(circle at 0 0, transparent 15.5px, #c5e1c5 16px); }
.tab.active::after { right: -16px; background: radial-gradient(circle at 100% 0, transparent 15.5px, #c5e1c5 16px); }
.bbb { width: 32px; height: 32px; }
.tab .clip { width: 312px; margin-left: 16px; font-size: 23.1px; -webkit-mask-image: linear-gradient(90deg, #000 265px, transparent 320px); }
.rec { width: 26px; height: 26px; margin-left: 7px; }
.tab.active .x { margin-left: 22px; stroke: #202124; }
.plus { width: 26px; height: 26px; margin-left: 31px; stroke: #2f4a31; stroke-width: 3; }
.winctl { margin-left: auto; display: flex; gap: 70px; padding: 0 35px 10px 0; }
.winctl svg { width: 22px; height: 22px; fill: none; stroke: #4b6f4d; stroke-width: 2; }

.toolbar { height: 72px; background: #c5e1c5; display: flex; align-items: center; padding-left: 30px; flex: none; }
.nav { width: 28px; height: 28px; margin-right: 36px; fill: none; stroke: #202124; stroke-width: 2.6; }
.nav.dim { stroke: #84987f; }
.omnibox { width: 2368px; height: 56px; margin-left: -6px; border-radius: 28px; background: #f0f8f1; display: flex; align-items: center; padding: 0 21px 0 27px; }
.lock { width: 18px; height: 24px; }
.url { font-size: 26.35px; color: #5f6368; margin-left: 23px; white-space: nowrap; }
.url b { font-weight: normal; color: #202124; letter-spacing: -0.15px; }
.ob.cam { width: 25px; height: 17px; margin-left: auto; }
.ob.share { width: 30px; height: 30px; margin-left: 37px; }
.ob.star { width: 30px; height: 30px; margin-left: 33px; }
.me { width: 44px; height: 44px; border-radius: 50%; background: #0058a1; color: #fff; font: 600 25px/42px "Open Sans", sans-serif; text-align: center; margin-left: 22px; }
.kebab { width: 6px; height: 28px; margin-left: 39px; }

.bookmarks { height: 66px; background: #c5e1c5; border-bottom: 2px solid #9fb5a1; display: flex; align-items: center; padding: 0 30px 9px 31px; font-size: 22.3px; flex: none; }
.bookmarks span { margin-left: 18px; }
.ico { width: 27px; height: 27px; }
.bookmarks .g { width: 30px; height: 22px; margin-left: 34px; }
.bookmarks .y { width: 30px; height: 21px; margin-left: 34px; }
.bookmarks .y + span { margin-left: 17px; }
.bookmarks .m { width: 30px; height: 30px; margin-left: 35px; }
.bookmarks .m + span { margin-left: 17px; }
.bookmarks .s { width: 32px; height: 32px; margin-left: 33px; }
.bookmarks .s + span { margin-left: 17px; }
.reading { margin-left: auto; height: 32px; border-left: 2px solid #93ab94; padding-left: 22px; display: flex; align-items: center; }
.reading svg { width: 28px; height: 28px; }
.reading span { font-size: 22.6px; }

/* meeting */
.app { flex: 1; display: flex; font-family: "DejaVu Sans", sans-serif; min-height: 0; }
.stage { width: 1737px; background: #061729; display: flex; flex-direction: column; }
.stage-head { height: 108px; padding: 4px 0 0 54px; display: flex; align-items: center; color: #fff; flex: none; }
.dots { width: 8px; height: 32px; fill: #fff; }
.stats { width: 62px; height: 62px; border-radius: 50%; background: #008081; display: flex; align-items: center; justify-content: center; margin-left: 44px; }
.stats svg { width: 30px; height: 30px; }
.record { width: 34px; height: 34px; margin: 4px 0 0 535px; }
.bar { width: 2px; height: 26px; background: #18375a; margin: 0 31px; }
.stage-head h1 { font-size: 26.3px; line-height: 40px; width: 322px; white-space: nowrap; }
.users { width: 44px; height: 32px; margin: 2px 0 0 529px; fill: none; stroke: #fff; stroke-width: 2.5; }
.talking { align-self: flex-end; width: 332px; height: 43px; margin-right: 28px; border-radius: 22px; background: #1a74d3; color: #fff; display: flex; align-items: center; padding: 0 11px 4px 0; font-size: 26.4px; white-space: nowrap; flex: none; }
.mic-dot { width: 28px; height: 28px; border-radius: 50%; background: #008081; display: flex; align-items: center; justify-content: center; margin: 4px 0 0 14px; }
.mic-dot svg { width: 24px; height: 24px; fill: none; stroke: #fff; stroke-width: 1.7; }
.slide { height: 977px; margin-top: 142px; background: #dcffba; position: relative; flex: none; }
.canvas { width: 1737px; height: 977px; }
.caption { direction: rtl; font-family: "DejaVu Sans", sans-serif; fill: #111; }
.caption.red { fill: #c3101c; }
.formula { font-family: "DejaVu Sans", sans-serif; fill: #2d2b45; stroke: #2d2b45; stroke-width: 1.3; text-anchor: middle; }
.bond { fill: none; stroke: #2d2b45; stroke-width: 4; stroke-linecap: round; stroke-linejoin: round; }
.ink-letters { font-family: Lato, sans-serif; font-weight: 400; fill: #f00; stroke: #f00; stroke-width: 0.6; text-anchor: middle; }
.ink { fill: none; stroke: #f00; stroke-width: 4.6; stroke-linecap: round; }
.full { position: absolute; left: 4px; top: 4px; width: 75px; height: 52px; border-radius: 4px; background: #f3f6f9; display: flex; align-items: center; justify-content: center; }
.full svg { width: 22px; height: 22px; margin-top: -2px; fill: none; stroke: #5c6b7c; stroke-width: 2; }
.actions { display: flex; padding: 145px 0 0 65px; gap: 42px; }
.round { width: 84px; height: 84px; border-radius: 50%; border: 6px solid #fff; display: flex; align-items: center; justify-content: center; position: relative; }
.round svg { width: 36px; height: 36px; fill: none; stroke: #fff; stroke-width: 2.6; stroke-linejoin: round; stroke-linecap: round; }
.round.blue { background: #0f70d7; border-color: #0f70d7; }
.cam-btn { margin-left: 509px; }
.round.phone svg { width: 30px; height: 30px; }
.round .big-mic { width: 40px; height: 40px; stroke-width: 1.8; }
.more { position: absolute; right: -9px; bottom: -6px; width: 29px; height: 29px; border-radius: 50%; background: #fff; display: flex; align-items: center; justify-content: center; }
.round .more svg { width: 15px; height: 9px; stroke: #4e5a66; stroke-width: 1.8; margin-top: 6px; }

/* shared notes */
.notes { width: 699px; background: #fff; display: flex; flex-direction: column; padding: 0 12px 28px 28px; color: #485365; }
.notes h2 { height: 76px; display: flex; align-items: center; gap: 20px; padding-right: 11px; font: bold 21.2px "DejaVu Sans Condensed", "DejaVu Sans", sans-serif; color: #4e5a66; }
.notes h2 svg { width: 12px; height: 24px; fill: none; stroke: #222; stroke-width: 2.2; }
.notes h2 span { white-space: nowrap; }
.pad { flex: 1; border-bottom: 2px solid #d2d7de; display: flex; flex-direction: column; }
.pad-tools { height: 111px; border-bottom: 2px solid #d3d8e0; display: flex; align-items: center; gap: 26px; padding: 12px 0 0 43px; }
.pad-tools svg { width: 30px; height: 30px; fill: none; stroke: #485365; stroke-width: 4; }
.pad-tools .redo { margin-left: 105px; }
.pad-tools .strike { margin-left: 10px; }
.pad-tools text { font-family: "DejaVu Serif", serif; font-weight: bold; fill: #485365; stroke: none; text-anchor: middle; }
.pad-tools .num text { font: bold 9.500px "DejaVu Sans", sans-serif; text-anchor: start; }
.pad-body { padding: 30px 29px; }
.pad-body p { height: 48px; line-height: 48px; }
.n1 { font-size: 23.8px; }
.n2 { font-size: 24.7px; }

/* sidebar */
.side { width: 300px; background: #f3f6f9; display: flex; flex-direction: column; color: #0c1c2e; position: relative; font-family: "DejaVu Sans Condensed", "DejaVu Sans", sans-serif; }
.side h3 { font-weight: bold; color: #0a5058; font-size: 22.2px; padding-right: 22px; display: flex; align-items: center; white-space: nowrap; flex: none; }
.h-a { height: 78px; }
.side .h-b { height: 79px; font-size: 19.6px; }
.link { display: flex; align-items: center; flex: none; padding-right: 35px; font-size: 25px; white-space: nowrap; }
.link svg { fill: none; stroke: #8c9aac; stroke-width: 2.6; stroke-linejoin: round; }
.chat { height: 92px; gap: 37px; }
.chat svg { width: 50px; height: 50px; }
.pages { height: 86px; gap: 38px; font-size: 25.5px; }
.link span { margin-top: -3px; }
.pages svg { width: 42px; height: 50px; }
.roster { flex: 1; display: flex; padding: 1px 13px 5px 0; min-height: 0; }
.scroll { width: 10px; border-radius: 5px; background: #b6b7bb; flex: none; }
.scroll i { display: block; height: 717px; border-radius: 5px; background: #8b8b8b; }
.roster ul { flex: 1; margin-top: -1px; background: radial-gradient(ellipse 140px 38px at 50% 100%, #c3c4c8 0, #dfe1e5 45%, rgba(243, 246, 249, 0) 100%); }
.roster li { height: 122px; display: flex; align-items: center; padding-right: 15px; gap: 22px; white-space: nowrap; font-size: 23.2px; }
.roster .wide { font-size: 24.5px; }
.roster .tight { font-size: 22px; }
.roster li div { display: flex; flex-direction: column; align-items: flex-start; line-height: 36px; margin-top: -2px; }
.roster small { font-size: 21.7px; color: #667586; padding-top: 2px; }
.av { width: 63px; height: 63px; border-radius: 50%; color: #fff; font: bold 22px/60px "DejaVu Sans", sans-serif; text-align: center; position: relative; flex: none; }
.av.sq { border-radius: 6px; }
.bd { position: absolute; left: -13px; bottom: -13px; width: 33px; height: 33px; border-radius: 50%; border: 3px solid #f3f6f9; background: #008081; display: flex; align-items: center; justify-content: center; }
.bd svg { width: 20px; height: 20px; fill: none; stroke: #fff; stroke-width: 1.8; }
.bd.red { background: #df2721; }
.bd.none { background: #f3f6f9; }
.pres { position: absolute; right: -6px; top: -6px; width: 32px; height: 32px; border-radius: 7px; border: 3px solid #f3f6f9; background: #0f70d7; display: flex; align-items: center; justify-content: center; }
.pres svg { width: 19px; height: 19px; fill: none; stroke: #fff; stroke-width: 3; }
.c1 { background: #4a148c; }
.c2 { background: #1976d2; }
.c3 { background: #311b92; }
.c4 { background: #0d47a1; }
.c5 { background: #1565c0; }
.c6 { background: #3949ab; }
.c7 { background: #512da8; }
.c8 { background: #303f9f; }
.c9 { background: #6a1b9a; }

/* taskbar */
.taskbar { height: 96px; background: #2a2a2b; display: flex; align-items: center; padding: 0 38px 0 816px; flex: none; color: #fff; }
.apps { display: flex; gap: 40.15px; align-items: center; }
.apps > svg { width: 48px; height: 48px; }
.current { width: 78px; height: 80px; border-radius: 8px; background: #373738; border: 1px solid #434344; margin-left: -15px; position: relative; display: flex; justify-content: center; align-items: flex-end; padding-bottom: 1px; }
.current svg { position: absolute; left: -1px; top: -1px; width: 78px; height: 80px; }
.current text { fill: #fff; text-anchor: middle; font-weight: bold; }
.current i { width: 32px; height: 6px; border-radius: 3px; background: #9cc5da; }
.tray { margin-left: auto; display: flex; align-items: center; }
.tray svg { fill: none; stroke: #fff; stroke-width: 2.4; }
.t1 { width: 28px; height: 16px; }
.t2 { width: 34px; height: 30px; margin-left: 33px; }
.t3 { width: 34px; height: 34px; margin-left: 31px; }
.tray .t4 { width: 24px; height: 34px; margin-left: 34px; stroke: #b7e3ea; }
.lang { font: 24px "DejaVu Sans", sans-serif; width: 20px; margin-left: 55px; }
.t5 { width: 34px; height: 26px; margin-left: 50px; }
.t6 { width: 34px; height: 28px; margin-left: 14px; }
.t7 { width: 34px; height: 22px; margin-left: 14px; }
.clock { margin-left: 26px; width: 112px; display: flex; flex-direction: column; align-items: flex-end; font-size: 23.2px; line-height: 32px; white-space: nowrap; padding-bottom: 3px; }
```
